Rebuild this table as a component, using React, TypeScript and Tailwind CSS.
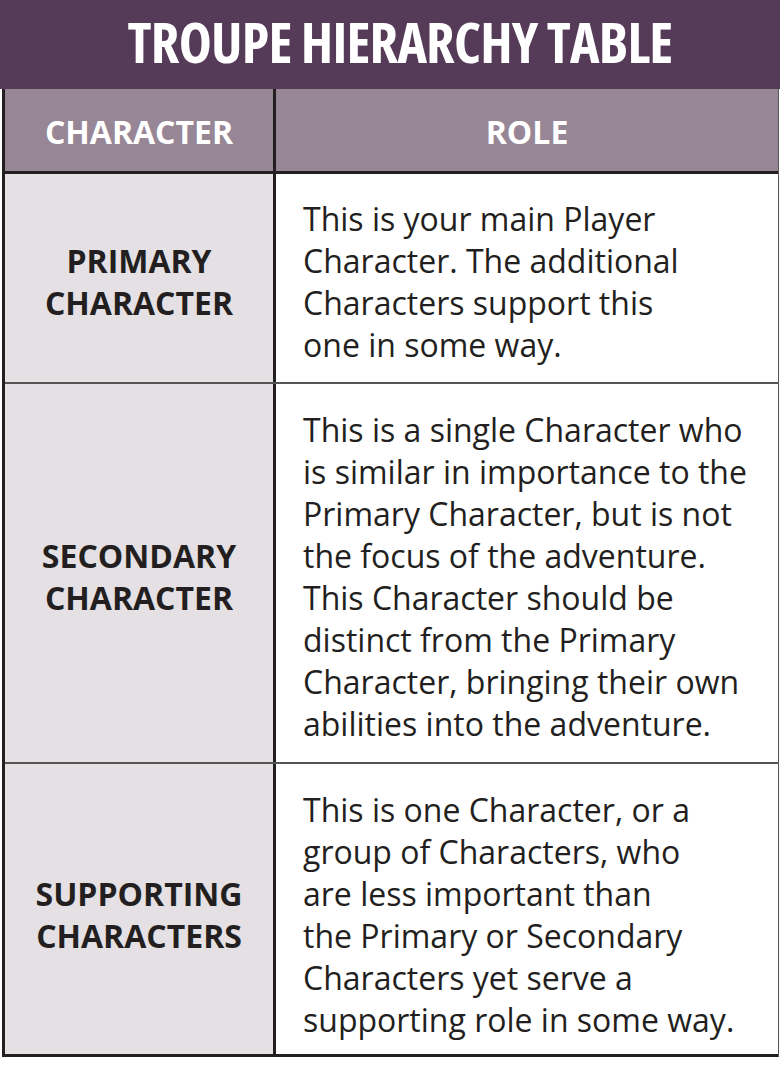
import React from "react";

const rows = [
  {
    label: ["PRIMARY", "CHARACTER"],
    text: [
      "This is your main Player",
      "Character. The additional",
      "Characters support this",
      "one in some way.",
    ],
    h: "h-[210px]",
    pt: "pt-[8px]",
  },
  {
    label: ["SECONDARY", "CHARACTER"],
    text: [
      "This is a single Character who",
      "is similar in importance to the",
      "Primary Character, but is not",
      "the focus of the adventure.",
      "This Character should be",
      "distinct from the Primary",
      "Character, bringing their own",
      "abilities into the adventure.",
    ],
    h: "h-[380px]",
    pt: "pt-[8px]",
  },
  {
    label: ["SUPPORTING", "CHARACTERS"],
    text: [
      "This is one Character, or a",
      "group of Characters, who",
      "are less important than",
      "the Primary or Secondary",
      "Characters yet serve a",
      "supporting role in some way.",
    ],
    h: "h-[293px]",
    pt: "pt-[12px]",
  },
];

export default function App() {
  return (
    <div className="w-[780px] h-[1065px] bg-white" style={{ fontFamily: '"Open Sans", "Noto Sans", sans-serif' }}>
      <div className="h-[89px] bg-[#553b58] flex items-center justify-center pb-[8px] pl-[20px]">
        <h1 className="text-white font-bold text-[56px] leading-none font-stretch-condensed tracking-[-0.8px]">
          TROUPE HIERARCHY TABLE
        </h1>
      </div>
      <div className="ml-[2px] w-[777px] border-l-[3px] border-r border-[#231f20] border-r-[#555]">
        <div className="flex h-[85px] bg-[#978696] border-b-[3px] border-[#231f20]">
          <div className="w-[271px] flex items-center justify-center border-r-[3px] border-[#231f20] pt-[4px]">
            <span className="text-white font-bold text-[32px]">CHARACTER</span>
          </div>
          <div className="flex-1 flex items-center justify-center pt-[4px]">
            <span className="text-white font-bold text-[32px]">ROLE</span>
          </div>
        </div>
        {rows.map((r, i) => (
          <div
            key={i}
            className={`flex ${r.h} ${i < rows.length - 1 ? "border-b-2 border-[#555]" : "border-b-[3px] border-[#231f20]"}`}
          >
            <div className={`w-[271px] bg-[#e4e0e4] flex items-center justify-center border-r-[3px] border-[#231f20] ${r.pt}`}>
              <div className="text-center text-[#231f20] font-bold text-[32px] leading-[42px]">
                {r.label.map((l, j) => (
                  <div key={j}>{l}</div>
                ))}
              </div>
            </div>
            <div className={`flex-1 flex items-center pl-[27px] ${r.pt}`}>
              <div className="text-[#231f20] text-[32px] leading-[42px]">
                {r.text.map((t, j) => (
                  <div key={j} className="whitespace-nowrap">{t}</div>
                ))}
              </div>
            </div>
          </div>
        ))}
      </div>
    </div>
  );
}
